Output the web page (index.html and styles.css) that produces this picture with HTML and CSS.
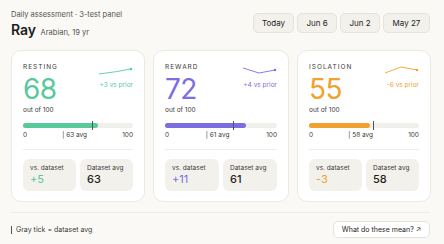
FILE: index.html
```html
<!DOCTYPE html>
<html lang="en">
<head>
    <meta charset="UTF-8">
    <title>Daily assessment</title>
    <link rel="stylesheet" href="styles.css">
</head>
<body>

<div class="page">
    <div class="top">
        <div>
            <div class="kicker">Daily assessment · 3-test panel</div>
            <div class="who"><span class="name">Ray</span> <span class="meta">Arabian, 19 yr</span></div>
        </div>
        <div class="dates">
            <button class="date">Today</button>
            <button class="date">Jun 6</button>
            <button class="date">Jun 2</button>
            <button class="date">May 27</button>
        </div>
    </div>

    <div class="cards">
        <!-- resting -->
        <div class="card green">
            <div class="head">
                <div>
                    <div class="label">RESTING</div>
                    <div class="score">68</div>
                </div>
                <div class="trend">
                    <svg width="35" height="10" viewBox="0 0 35 10">
                        <path d="M1 8 Q 18 6 33 3" fill="none" stroke="currentColor" stroke-width="0.9"/>
                        <circle cx="33" cy="3" r="1.2" fill="currentColor"/>
                    </svg>
                    <div class="delta">+3 vs prior</div>
                </div>
            </div>
            <div class="outof">out of 100</div>
            <div class="bar">
                <div class="fill" style="width: 68%"></div>
                <div class="tick" style="left: 63%"></div>
            </div>
            <div class="scale"><span>0</span><span>| 63 avg</span><span>100</span></div>
            <div class="stats">
                <div class="stat"><div class="stat-label">vs. dataset</div><div class="stat-val accent">+5</div></div>
                <div class="stat"><div class="stat-label">Dataset avg</div><div class="stat-val">63</div></div>
            </div>
        </div>

        <!-- reward -->
        <div class="card purple">
            <div class="head">
                <div>
                    <div class="label">REWARD</div>
                    <div class="score">72</div>
                </div>
                <div class="trend">
                    <svg width="35" height="10" viewBox="0 0 35 10">
                        <path d="M1 2 L 17 7 L 33 4" fill="none" stroke="currentColor" stroke-width="0.9"/>
                        <circle cx="33" cy="4" r="1.2" fill="currentColor"/>
                    </svg>
                    <div class="delta">+4 vs prior</div>
                </div>
            </div>
            <div class="outof">out of 100</div>
            <div class="bar">
                <div class="fill" style="width: 72%"></div>
                <div class="tick" style="left: 61%"></div>
            </div>
            <div class="scale"><span>0</span><span>| 61 avg</span><span>100</span></div>
            <div class="stats">
                <div class="stat"><div class="stat-label">vs. dataset</div><div class="stat-val accent">+11</div></div>
                <div class="stat"><div class="stat-label">Dataset avg</div><div class="stat-val">61</div></div>
            </div>
        </div>

        <!-- isolation -->
        <div class="card orange">
            <div class="head">
                <div>
                    <div class="label">ISOLATION</div>
                    <div class="score">55</div>
                </div>
                <div class="trend">
                    <svg width="35" height="10" viewBox="0 0 35 10">
                        <path d="M1 7 L 17 1 L 33 4" fill="none" stroke="currentColor" stroke-width="0.9"/>
                        <circle cx="33" cy="4" r="1.2" fill="currentColor"/>
                    </svg>
                    <div class="delta">-6 vs prior</div>
                </div>
            </div>
            <div class="outof">out of 100</div>
            <div class="bar">
                <div class="fill" style="width: 55%"></div>
                <div class="tick" style="left: 58%"></div>
            </div>
            <div class="scale"><span>0</span><span>| 58 avg</span><span>100</span></div>
            <div class="stats">
                <div class="stat"><div class="stat-label">vs. dataset</div><div class="stat-val accent">-3</div></div>
                <div class="stat"><div class="stat-label">Dataset avg</div><div class="stat-val">58</div></div>
            </div>
        </div>
    </div>

    <div class="footer">
        <div class="legend"><span class="legend-tick"></span>Gray tick = dataset avg</div>
        <button class="help">What do these mean? ↗</button>
    </div>
</div>

</body>
</html>
```

FILE: styles.css
```css
body {
    margin: 0;
    background-color: #faf9f6;
    font-family: Inter, "Noto Sans", sans-serif;
    color: #1f1e1c;
}

.page {
    padding: 9px 14px 0 11px;
}

.top {
    display: flex;
    justify-content: space-between;
    align-items: flex-start;
    height: 34px;
}

.kicker {
    font-size: 7.5px;
    color: #55534e;
    line-height: 10px;
    margin-top: 1px;
}

.who {
    margin-top: 2px;
    height: 14px;
    line-height: 14px;
}

.name {
    font-size: 14px;
    font-weight: 600;
}

.meta {
    font-size: 7.5px;
    color: #55534e;
}

.dates {
    display: flex;
    gap: 3px;
    margin-top: 4px;
}

.date {
    height: 20px;
    padding: 0 8px;
    font-family: inherit;
    font-size: 8px;
    color: #1f1e1c;
    background-color: #f3f1ec;
    border: 1px solid #e6e3dc;
    border-radius: 5px;
}

.date:first-child {
    width: 41px;
}

.date:nth-child(2) {
    width: 40px;
}

.date:nth-child(3) {
    width: 40px;
}

.date:last-child {
    width: 47px;
}

.cards {
    display: grid;
    grid-template-columns: 134px 136px 134px;
    gap: 8px;
    margin-top: 7px;
}

.card {
    background-color: #fff;
    border: 1px solid #ece9e3;
    border-radius: 10px;
    padding: 12px 11px 10px;
}

.green { --c: #58c99b; }
.purple { --c: #7c6ee0; }
.orange { --c: #f0a12e; }

.head {
    display: flex;
    justify-content: space-between;
}

.label {
    font-size: 6.5px;
    letter-spacing: 1px;
    color: #3d3b37;
    line-height: 9px;
}

.score {
    font-size: 28px;
    line-height: 28px;
    color: var(--c);
    margin-top: 3px;
    letter-spacing: -0.5px;
}

.trend {
    color: var(--c);
    text-align: right;
    padding-top: 3px;
}

.trend svg {
    display: block;
    margin-left: auto;
}

.delta {
    font-size: 6.5px;
    line-height: 8px;
    margin-top: 5px;
}

.outof {
    font-size: 6.5px;
    line-height: 9px;
    color: #3d3b37;
    margin-top: 3px;
}

.bar {
    position: relative;
    height: 5px;
    border-radius: 3px;
    background-color: #f1efe9;
    margin-top: 8px;
}

.fill {
    height: 100%;
    border-radius: 3px;
    background-color: var(--c);
}

.tick {
    position: absolute;
    top: -2px;
    width: 1px;
    height: 9px;
    background-color: #55534e;
}

.scale {
    display: flex;
    justify-content: space-between;
    font-size: 6.5px;
    line-height: 9px;
    color: #3d3b37;
    margin-top: 3px;
}

.stats {
    display: grid;
    grid-template-columns: 1fr 1fr;
    gap: 4px;
    border-top: 1px solid #efede8;
    margin-top: 9px;
    padding-top: 9px;
}

.stat {
    box-sizing: border-box;
    height: 32px;
    background-color: #f3f1ec;
    border-radius: 6px;
    padding: 5px 7px;
}

.stat-label {
    font-size: 6.5px;
    line-height: 8px;
    color: #3d3b37;
}

.stat-val {
    font-size: 11px;
    line-height: 13px;
    font-weight: 500;
    margin-top: 1px;
}

.accent {
    color: var(--c);
    font-weight: 400;
}

.footer {
    display: flex;
    justify-content: space-between;
    align-items: center;
    border-top: 1px solid #efede8;
    margin-top: 10px;
    padding-top: 8px;
}

.legend {
    display: flex;
    align-items: center;
    font-size: 7px;
    color: #3d3b37;
}

.legend-tick {
    width: 1px;
    height: 8px;
    background-color: #55534e;
    margin-right: 4px;
}

.help {
    height: 17px;
    width: 97px;
    font-family: inherit;
    font-size: 7px;
    color: #1f1e1c;
    background-color: #fff;
    border: 1px solid #e6e3dc;
    border-radius: 5px;
}
```
